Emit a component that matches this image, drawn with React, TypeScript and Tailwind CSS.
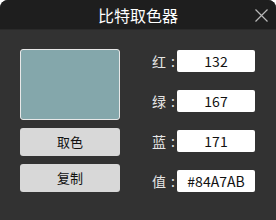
import React from "react";

const font = { fontFamily: '"Noto Sans CJK SC", "Noto Sans", sans-serif' };

function Row({ label, value }: { label: string; value: string }) {
  return (
    <div className="flex items-center h-[22px]">
      <span className="text-[14px] leading-none text-[#e6e6e6] w-[14px]">{label}</span>
      <span className="text-[14px] leading-none text-[#e6e6e6] ml-[5px] w-[3px]">:</span>
      <div className="ml-[3px] w-[78px] h-[22px] bg-white rounded-[2px] flex items-center justify-center">
        <span className="text-[14px] leading-none text-[#111]">{value}</span>
      </div>
    </div>
  );
}

export default function App() {
  return (
    <div className="w-[276px] h-[220px] bg-white" style={font}>
      <div className="w-[276px] h-[220px] bg-[#323232] rounded-t-[8px] overflow-hidden flex flex-col">
        <div className="h-[30px] bg-[#1e1e1e] flex items-center justify-center relative border-b border-[#2a2a2a]">
          <span className="text-[16px] leading-none text-white">比特取色器</span>
          <svg className="absolute left-[255px] top-[9px]" width="13" height="13" viewBox="0 0 13 13">
            <path d="M0.5 0.5 L12.5 12.5 M12.5 0.5 L0.5 12.5" stroke="#b8b8b8" strokeWidth="1.2" fill="none" />
          </svg>
        </div>
        <div className="flex pl-[20px] pt-[19px]">
          <div className="w-[100px] flex flex-col gap-[8px]">
            <div className="h-[71px] bg-[#84A7AB] border border-[#e8e8e8] rounded-[3px]" />
            <div className="h-[28px] bg-[#d8d8d8] rounded-[3px] flex items-center justify-center text-[13px] text-[#111]">取色</div>
            <div className="h-[28px] bg-[#d8d8d8] rounded-[3px] flex items-center justify-center text-[13px] text-[#111]">复制</div>
          </div>
          <div className="ml-[32px] pt-[1px] flex flex-col gap-[18px]">
            <Row label="红" value="132" />
            <Row label="绿" value="167" />
            <Row label="蓝" value="171" />
            <Row label="值" value="#84A7AB" />
          </div>
        </div>
      </div>
    </div>
  );
}
